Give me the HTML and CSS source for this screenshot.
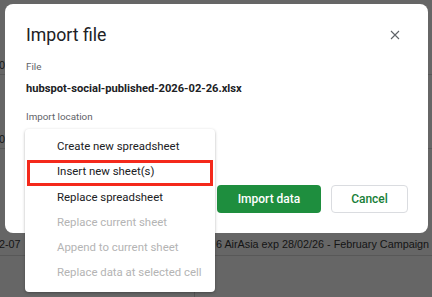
FILE: index.html
```html
<!DOCTYPE html>
<html>
<head>
<meta charset="utf-8">
<link rel="stylesheet" href="styles.css">
</head>
<body>
<div class="screen">
  <div class="sheet">
    <div class="row r1"><span class="cell c-left">02</span></div>
    <div class="row r2"><span class="cell c-left">02</span></div>
    <div class="row r3"><span class="cell c-left">2-07</span><span class="cell c-right">6 AirAsia exp 28/02/26 - February Campaign</span></div>
    <div class="row r4"><span class="colline"></span></div>
  </div>

  <div class="dialog">
    <div class="head">
      <div class="title">Import file</div>
      <svg class="close" viewBox="0 0 10 10" width="10" height="10"><path d="M1 1 L9 9 M9 1 L1 9" stroke="#5f6368" stroke-width="1.1" fill="none"/></svg>
    </div>
    <div class="label l-file">File</div>
    <div class="filename">hubspot-social-published-2026-02-26.xlsx</div>
    <div class="label l-loc">Import location</div>
    <div class="actions">
      <button class="btn primary">Import data</button>
      <button class="btn secondary">Cancel</button>
    </div>
  </div>

  <div class="menu">
    <div class="item">Create new spreadsheet</div>
    <div class="item">Insert new sheet(s)</div>
    <div class="item">Replace spreadsheet</div>
    <div class="item disabled">Replace current sheet</div>
    <div class="item disabled">Append to current sheet</div>
    <div class="item disabled">Replace data at selected cell</div>
  </div>

  <div class="highlight"></div>
</div>
</body>
</html>
```

FILE: styles.css
```css
html, body {
  margin: 0;
  padding: 0;
}
body {
  width: 432px;
  height: 297px;
  overflow: hidden;
  background: #666666;
}
.screen {
  position: relative;
  width: 432px;
  height: 297px;
  overflow: hidden;
  font-family: Roboto, "Liberation Sans", Arial, sans-serif;
}
.sheet {
  display: flex;
  flex-direction: column;
  width: 432px;
  height: 297px;
  background: #666666;
  font-family: "Liberation Sans", Arial, sans-serif;
  font-size: 10.8px;
  color: #141414;
}
.row {
  position: relative;
  display: flex;
  align-items: flex-end;
  border-bottom: 1px solid #585858;
  box-sizing: border-box;
  overflow: hidden;
}
.r1 { height: 75px; }
.r2 { height: 74px; }
.r3 { height: 107px; }
.r4 { flex: 1; border-bottom: none; }
.cell {
  line-height: 16px;
  padding-bottom: 3px;
  white-space: nowrap;
  flex-shrink: 0;
}
.c-left {
  width: 216px;
  margin-left: -1px;
}
.r1 .c-left, .r2 .c-left { padding-bottom: 1px; }
.c-right {
  margin-left: 1px;
}
.colline {
  position: absolute;
  left: 194px;
  top: 0;
  bottom: 0;
  width: 1px;
  background: #555555;
}

.dialog {
  position: absolute;
  left: 5px;
  top: 4px;
  width: 423px;
  height: 229px;
  box-sizing: border-box;
  background: #ffffff;
  border-radius: 8px;
  padding: 19px 20px 20px 21px;
  display: flex;
  flex-direction: column;
}
.head {
  display: flex;
  justify-content: space-between;
  align-items: center;
  height: 24px;
}
.title {
  font-size: 17.7px;
  line-height: 24px;
  color: #202124;
}
.close {
  margin-right: 8px;
}
.label {
  font-size: 9.8px;
  line-height: 14px;
  color: #5f6368;
}
.l-file { margin-top: 13px; }
.filename {
  margin-top: 7px;
  font-size: 11.15px;
  line-height: 16px;
  font-weight: bold;
  color: #202124;
}
.l-loc { margin-top: 13px; }
.actions {
  margin-top: auto;
  display: flex;
  justify-content: flex-end;
  gap: 10px;
}
.btn {
  height: 28px;
  border-radius: 4px;
  font-family: Roboto, "Liberation Sans", Arial, sans-serif;
  font-size: 12px;
  font-weight: 500;
  box-sizing: border-box;
  padding: 0;
}
.primary {
  width: 104px;
  background: #1e8e3e;
  color: #ffffff;
  border: none;
}
.secondary {
  width: 77px;
  background: #ffffff;
  color: #188038;
  border: 1px solid #dadce0;
}

.menu {
  position: absolute;
  left: 25px;
  top: 129px;
  width: 190px;
  height: 163px;
  box-sizing: border-box;
  background: #ffffff;
  border-radius: 4px;
  box-shadow: 0 1px 3px rgba(0,0,0,0.3);
  padding-top: 5px;
  display: flex;
  flex-direction: column;
}
.item {
  height: 25.3px;
  line-height: 25px;
  padding-left: 32px;
  font-size: 11.4px;
  color: #202124;
  white-space: nowrap;
}
.item.disabled {
  color: #b4b4b4;
}
.highlight {
  position: absolute;
  left: 27px;
  top: 160px;
  width: 186px;
  height: 26px;
  box-sizing: border-box;
  border: 3px solid #f4291b;
}
```
